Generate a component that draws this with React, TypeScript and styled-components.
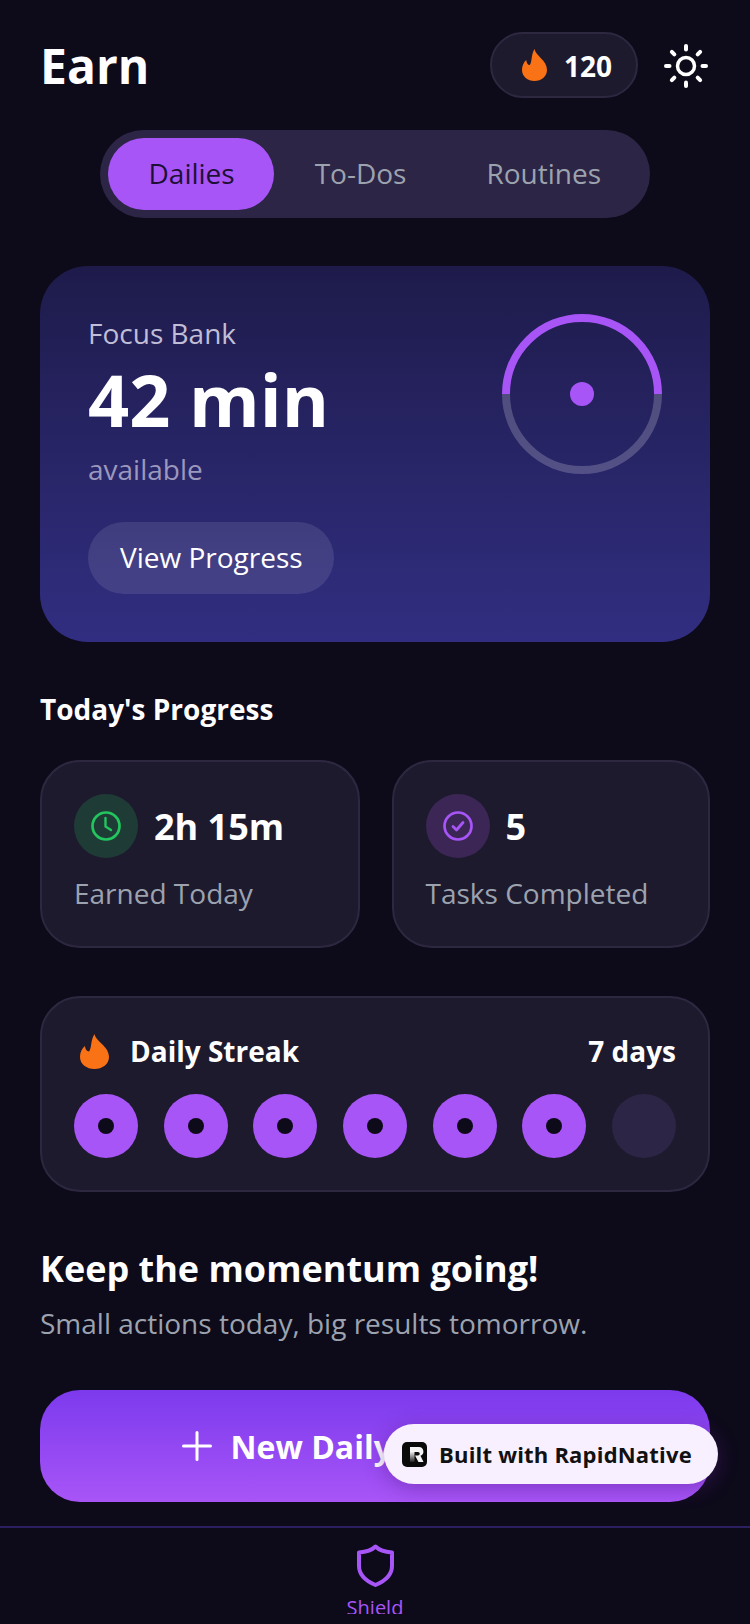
import React from "react";
import styled, { createGlobalStyle } from "styled-components";
import { IoAdd } from "react-icons/io5";

const Global = createGlobalStyle`
  html, body { margin: 0; padding: 0; background: #0d0a1a; }
  * { box-sizing: border-box; }
  body { font-family: "Open Sans", "Noto Sans", sans-serif; }
`;

const Screen = styled.div`
  position: relative;
  width: 750px;
  height: 1624px;
  overflow: hidden;
  background: #0d0a1a;
  display: flex;
  flex-direction: column;
`;

const Content = styled.main`
  flex: 1;
  padding: 32px 40px 0;
  display: flex;
  flex-direction: column;
`;

const Header = styled.header`
  display: flex;
  align-items: center;
  justify-content: space-between;
  height: 66px;
`;

const Title = styled.h1`
  margin: 0;
  padding-top: 2px;
  font-size: 48px;
  line-height: 66px;
  font-weight: 700;
  color: #fff;
`;

const HeaderRight = styled.div`
  display: flex;
  align-items: center;
  gap: 25px;
  padding-right: 1px;
`;

const PointsPill = styled.div`
  display: flex;
  align-items: center;
  gap: 17px;
  height: 66px;
  padding: 0 24px 0 30px;
  background: #1e1a2e;
  border: 2px solid #2d2840;
  border-radius: 33px;
`;

const PointsValue = styled.span`
  padding-top: 2px;
  font-size: 28px;
  font-weight: 700;
  color: #fff;
`;

const FlameIcon = styled.svg<{ $w: number; $h: number }>`
  width: ${(p) => p.$w}px;
  height: ${(p) => p.$h}px;
  flex: none;
  display: block;
  fill: #f97316;
`;

const SunIcon = styled.svg`
  width: 46px;
  height: 46px;
  margin-top: 2px;
  display: block;
  stroke: #fff;
  fill: none;
  stroke-linecap: round;
`;

const Tabs = styled.nav`
  align-self: center;
  display: flex;
  margin-top: 32px;
  padding: 8px;
  width: 550px;
  height: 88px;
  border-radius: 44px;
  background: #2d2545;
`;

const Tab = styled.div<{ $active?: boolean }>`
  display: flex;
  align-items: center;
  justify-content: center;
  height: 72px;
  padding: 0 39.5px 3px 40.5px;
  border-radius: 36px;
  font-size: 28px;
  color: ${(p) => (p.$active ? "#1e1035" : "#9ca3af")};
  background: ${(p) => (p.$active ? "#a855f7" : "transparent")};
`;

const BankCard = styled.section`
  margin-top: 48px;
  height: 376px;
  padding: 48px;
  border-radius: 48px;
  background: linear-gradient(180deg, #1e1b4b 0%, #312e81 100%);
  display: flex;
  justify-content: space-between;
  align-items: flex-start;
`;

const BankText = styled.div`
  display: flex;
  flex-direction: column;
  align-items: flex-start;
`;

const BankLabel = styled.div`
  margin-top: -1px;
  font-size: 28px;
  line-height: 40px;
  color: #c0bdd6;
`;

const BankValue = styled.div`
  margin-top: 2px;
  font-size: 72px;
  line-height: 88px;
  font-weight: 700;
  color: #fff;
`;

const BankSub = styled.div`
  font-size: 28px;
  line-height: 40px;
  margin-top: 6px;
  color: #9b98bd;
`;

const ProgressButton = styled.div`
  margin-top: 33px;
  height: 72px;
  padding: 0 31px 2px 32px;
  display: flex;
  align-items: center;
  border-radius: 36px;
  background: rgba(255, 255, 255, 0.1);
  color: #fff;
  font-size: 28px;
`;

const RingSvg = styled.svg`
  width: 160px;
  height: 160px;
  display: block;
`;

const SectionTitle = styled.h2`
  margin: 47px 0 0;
  font-size: 28px;
  line-height: 40px;
  font-weight: 700;
  color: #fff;
`;

const StatsRow = styled.div`
  margin-top: 31px;
  display: grid;
  grid-template-columns: 319.5px 318.5px;
  gap: 32px;
`;

const Panel = styled.div`
  background: #1e1a2e;
  border: 2px solid #2d2840;
  border-radius: 40px;
  padding: 32px;
`;

const StatCard = styled(Panel)`
  height: 188px;
`;

const StatTop = styled.div`
  display: flex;
  align-items: center;
  gap: 16px;
`;

const IconCircle = styled.div<{ $bg: string }>`
  width: 64px;
  height: 64px;
  border-radius: 50%;
  background: ${(p) => p.$bg};
  display: flex;
  align-items: center;
  justify-content: center;
`;

const StatGlyph = styled.svg<{ $color: string }>`
  width: 32px;
  height: 32px;
  display: block;
  fill: none;
  stroke: ${(p) => p.$color};
  stroke-linecap: round;
  stroke-linejoin: round;
`;

const StatValue = styled.div`
  font-size: 36px;
  font-weight: 700;
  color: #fff;
`;

const StatLabel = styled.div`
  margin-top: 15px;
  font-size: 28px;
  line-height: 40px;
  color: #9ca3af;
`;

const StreakCard = styled(Panel)`
  margin-top: 48px;
  height: 196px;
`;

const StreakHead = styled.div`
  display: flex;
  align-items: center;
  justify-content: space-between;
  height: 48px;
  margin-top: -3px;
`;

const StreakName = styled.div`
  display: flex;
  align-items: center;
  gap: 21px;
  padding-left: 6px;
  font-size: 28px;
  font-weight: 700;
  color: #fff;
`;

const StreakDays = styled.div`
  font-size: 28px;
  font-weight: 700;
  color: #fff;
`;

const Dots = styled.div`
  margin-top: 19px;
  display: flex;
  justify-content: space-between;
`;

const DayDot = styled.div<{ $done: boolean }>`
  width: 64px;
  height: 64px;
  border-radius: 50%;
  background: ${(p) => (p.$done ? "#a855f7" : "#2d2545")};
  display: flex;
  align-items: center;
  justify-content: center;
`;

const DayInner = styled.div`
  width: 16px;
  height: 16px;
  border-radius: 50%;
  background: #0d0a1a;
`;

const Momentum = styled.h2`
  margin: 49px 0 0;
  font-size: 36px;
  line-height: 56px;
  font-weight: 700;
  color: #fff;
`;

const MomentumSub = styled.p`
  margin: 6px 0 0;
  font-size: 28px;
  line-height: 40px;
  color: #9ca3af;
`;

const NewButton = styled.div`
  margin-top: 47px;
  height: 112px;
  border-radius: 40px;
  background: linear-gradient(180deg, #7c3aed 0%, #a855f7 100%);
  display: flex;
  align-items: center;
  justify-content: center;
  gap: 10px;
  color: #fff;
  font-size: 32px;
  font-weight: 700;
`;

const NewButtonLabel = styled.span`
  min-width: 347px;
`;

const BottomBar = styled.footer`
  height: 98px;
  border-top: 2px solid #2d2060;
  display: flex;
  flex-direction: column;
  align-items: center;
  padding-top: 16px;
`;

const ShieldIcon = styled.svg`
  width: 37px;
  height: 43px;
  flex: none;
  display: block;
  fill: none;
  stroke: #a855f7;
  stroke-width: 4;
  stroke-linejoin: round;
`;

const BarLabel = styled.div`
  font-size: 20px;
  line-height: 28px;
  height: 20px;
  margin-top: 7px;
  overflow: hidden;
  color: #a855f7;
`;

const Badge = styled.div`
  position: absolute;
  left: 384px;
  top: 1424px;
  width: 334px;
  height: 60px;
  border-radius: 30px;
  background: #f8f0ff;
  box-shadow: 0 4px 20px rgba(88, 28, 135, 0.45);
  display: flex;
  align-items: center;
  gap: 12px;
  padding-left: 18px;
  font-size: 22px;
  letter-spacing: 0.2px;
  font-weight: 700;
  color: #111;
  white-space: nowrap;
`;

const BadgeLogo = styled.svg`
  width: 25px;
  height: 25px;
  flex: none;
`;

const FLAME =
  "M12 0C13 7 24 11 24 21C24 27.5 18.5 32 12 32C5.5 32 0 27.5 0 21C0 17 1.5 13.5 4 11C4.5 14 5.5 16 7.5 16C10 12 8.5 6 12 0Z";

const Flame = ({ w, h }: { w: number; h: number }) => (
  <FlameIcon $w={w} $h={h} viewBox="0 0 24 32" preserveAspectRatio="none">
    <path d={FLAME} />
  </FlameIcon>
);

const Sun = () => {
  const angles = [0, 45, 90, 135, 180, 225, 270, 315];
  return (
    <SunIcon viewBox="0 0 46 46">
      <circle cx="23" cy="23" r="8.5" strokeWidth="3.5" />
      {angles.map((a) => (
        <line key={a} x1="23" y1="6.5" x2="23" y2="3" strokeWidth="4" transform={`rotate(${a} 23 23)`} />
      ))}
    </SunIcon>
  );
};

export default function App() {
  const days = [true, true, true, true, true, true, false];
  return (
    <Screen>
      <Global />
      <Content>
        <Header>
          <Title>Earn</Title>
          <HeaderRight>
            <PointsPill>
              <Flame w={25} h={32} />
              <PointsValue>120</PointsValue>
            </PointsPill>
            <Sun />
          </HeaderRight>
        </Header>
        <Tabs>
          <Tab $active>Dailies</Tab>
          <Tab>To-Dos</Tab>
          <Tab>Routines</Tab>
        </Tabs>
        <BankCard>
          <BankText>
            <BankLabel>Focus Bank</BankLabel>
            <BankValue>42 min</BankValue>
            <BankSub>available</BankSub>
            <ProgressButton>View Progress</ProgressButton>
          </BankText>
          <RingSvg viewBox="0 0 160 160">
            <path d="M4 80a76 76 0 0 0 152 0" fill="none" stroke="rgba(255,255,255,0.2)" strokeWidth="8" />
            <path d="M4 80a76 76 0 0 1 152 0" fill="none" stroke="#a855f7" strokeWidth="8" />
            <circle cx="80" cy="80" r="12" fill="#a855f7" />
          </RingSvg>
        </BankCard>
        <SectionTitle>Today's Progress</SectionTitle>
        <StatsRow>
          <StatCard>
            <StatTop>
              <IconCircle $bg="#1f3b36">
                <StatGlyph $color="#22c55e" viewBox="0 0 32 32">
                  <circle cx="16" cy="16" r="13.5" strokeWidth="2.7" />
                  <path d="M15.5 8V16.5L21 20" strokeWidth="2.4" />
                </StatGlyph>
              </IconCircle>
              <StatValue>2h 15m</StatValue>
            </StatTop>
            <StatLabel>Earned Today</StatLabel>
          </StatCard>
          <StatCard>
            <StatTop>
              <IconCircle $bg="#3b2656">
                <StatGlyph $color="#a855f7" viewBox="0 0 32 32">
                  <circle cx="16" cy="16" r="13.5" strokeWidth="2.7" />
                  <path d="M11 16.5L14.5 20L21 12.5" strokeWidth="2.8" />
                </StatGlyph>
              </IconCircle>
              <StatValue>5</StatValue>
            </StatTop>
            <StatLabel>Tasks Completed</StatLabel>
          </StatCard>
        </StatsRow>
        <StreakCard>
          <StreakHead>
            <StreakName>
              <Flame w={29} h={35} />
              Daily Streak
            </StreakName>
            <StreakDays>7 days</StreakDays>
          </StreakHead>
          <Dots>
            {days.map((d, i) => (
              <DayDot key={i} $done={d}>
                {d && <DayInner />}
              </DayDot>
            ))}
          </Dots>
        </StreakCard>
        <Momentum>Keep the momentum going!</Momentum>
        <MomentumSub>Small actions today, big results tomorrow.</MomentumSub>
        <NewButton>
          <IoAdd size={48} />
          <NewButtonLabel>New Daily</NewButtonLabel>
        </NewButton>
      </Content>
      <BottomBar>
        <ShieldIcon viewBox="0 0 37 43">
          <path d="M18.5 2.5C22 6 28 8 35 8.5V22C35 31 28 37 18.5 41C9 37 2 31 2 22V8.5C9 8 15 6 18.5 2.5Z" />
        </ShieldIcon>
        <BarLabel>Shield</BarLabel>
      </BottomBar>
      <Badge>
        <BadgeLogo viewBox="0 0 25 25">
          <defs>
            <linearGradient id="stem" x1="0" y1="0" x2="0" y2="1">
              <stop offset="0" stopColor="#ffffff" />
              <stop offset="1" stopColor="#222222" />
            </linearGradient>
          </defs>
          <rect width="25" height="25" rx="5" fill="#0a0a0a" />
          <rect x="8" y="9" width="4.5" height="11" fill="url(#stem)" />
          <path d="M8 5H17a4.5 4.5 0 0 1 1.5 8.7L21.5 20H16.5L13 13.5H16a1.7 1.7 0 0 0 0-3.5H8Z" fill="#f4f4f4" />
        </BadgeLogo>
        Built with RapidNative
      </Badge>
    </Screen>
  );
}
